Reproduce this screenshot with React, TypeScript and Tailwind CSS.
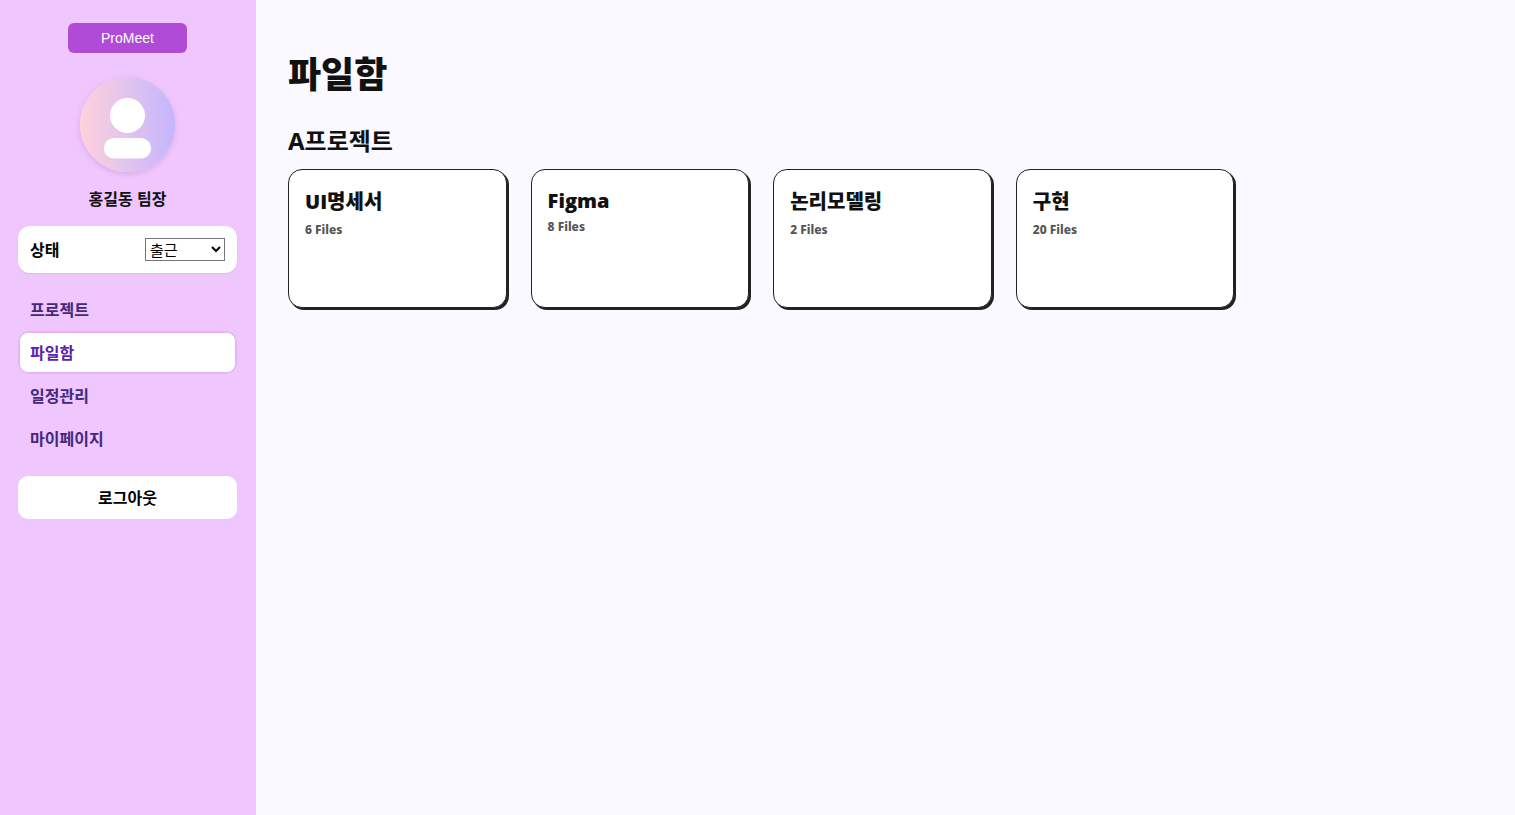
const folders = [
  { name: 'UI명세서', count: 6 },
  { name: 'Figma', count: 8, latin: true },
  { name: '논리모델링', count: 2 },
  { name: '구현', count: 20 },
];

const menu = [
  { label: '프로젝트', active: false },
  { label: '파일함', active: true },
  { label: '일정관리', active: false },
  { label: '마이페이지', active: false },
];

function Avatar() {
  return (
    <div className="mt-6 h-[95px] w-[95px] rounded-full bg-linear-to-r from-[#ffd1dc] to-[#c4b5fd] shadow-[0_2px_6px_rgba(0,0,0,0.12)]">
      <svg viewBox="0 0 95 95" className="h-full w-full" aria-hidden="true">
        <circle cx="47.5" cy="38.5" r="17.5" fill="#fff" />
        <rect x="23.8" y="61" width="47.4" height="20.5" rx="10.25" fill="#fff" />
      </svg>
    </div>
  );
}

function Sidebar() {
  return (
    <aside className="flex w-64 shrink-0 flex-col items-center border-r border-[#eec5fe] bg-[#f0c6ff] px-[18px] pt-[23px] text-base font-bold">
      <button
        type="button"
        className="h-[30px] rounded-md bg-[#b04bd8] px-[33px] font-['Liberation_Sans',Arial,sans-serif] text-sm font-normal text-white"
      >
        ProMeet
      </button>
      <Avatar />
      <p className="mt-[15px] leading-6">홍길동 팀장</p>
      <div className="mt-[15px] flex w-full items-center justify-between rounded-xl bg-white p-3 shadow-[0_1px_2px_rgba(0,0,0,0.08)]">
        <label htmlFor="status" className="pt-px leading-[22px] text-black">
          상태
        </label>
        <select
          id="status"
          defaultValue="출근"
          className="h-[23px] w-20 border border-[#767676] bg-white pb-px text-[15px] leading-5 font-normal text-black"
        >
          <option>출근</option>
          <option>퇴근</option>
        </select>
      </div>
      <nav className="mt-[15px] w-full">
        {menu.map((item) => (
          <a
            key={item.label}
            href="#"
            className={
              item.active
                ? 'block rounded-[10px] bg-white px-3 pt-[11px] pb-[9px] leading-[23px] text-[#5b21b6] shadow-[inset_0_0_0_2px_#e6b4f8]'
                : 'block rounded-[10px] px-3 pt-[11px] pb-[9px] leading-[23px] text-[#43287c]'
            }
          >
            {item.label}
          </a>
        ))}
      </nav>
      <button
        type="button"
        className="mt-4 w-full rounded-[10px] bg-white pt-[11px] pb-[9px] leading-[23px] text-black"
      >
        로그아웃
      </button>
    </aside>
  );
}

export default function App() {
  return (
    <div className="flex min-h-screen bg-[#faf9ff] font-['Noto_Sans','Noto_Sans_CJK_KR',sans-serif] text-[#111]">
      <Sidebar />
      <main className="flex-1 pt-[49px] pr-[38px] pb-8 pl-8">
        <h1 className="text-4xl leading-[52px] font-black">파일함</h1>
        <h2 className="mt-[23px] text-2xl leading-[34px] font-bold">A프로젝트</h2>
        <div className="mt-[11px] grid grid-cols-[repeat(auto-fill,minmax(210px,1fr))] gap-6">
          {folders.map((folder) => (
            <a
              key={folder.name}
              href="#"
              className="block min-h-[139px] rounded-[14px] border border-[#222] bg-white px-4 pt-[17px] pb-4 shadow-[2px_2px_0_#222]"
            >
              <h3
                className={
                  folder.latin
                    ? "font-['Open_Sans','Noto_Sans_CJK_KR',sans-serif] text-xl leading-[27px] font-extrabold"
                    : "font-['Open_Sans','Noto_Sans_CJK_KR',sans-serif] text-xl leading-[30px] font-black"
                }
              >
                {folder.name}
              </h3>
              <p className="mt-1 text-xs leading-[18px] font-extrabold text-[#555]">{folder.count} Files</p>
            </a>
          ))}
        </div>
      </main>
    </div>
  );
}
